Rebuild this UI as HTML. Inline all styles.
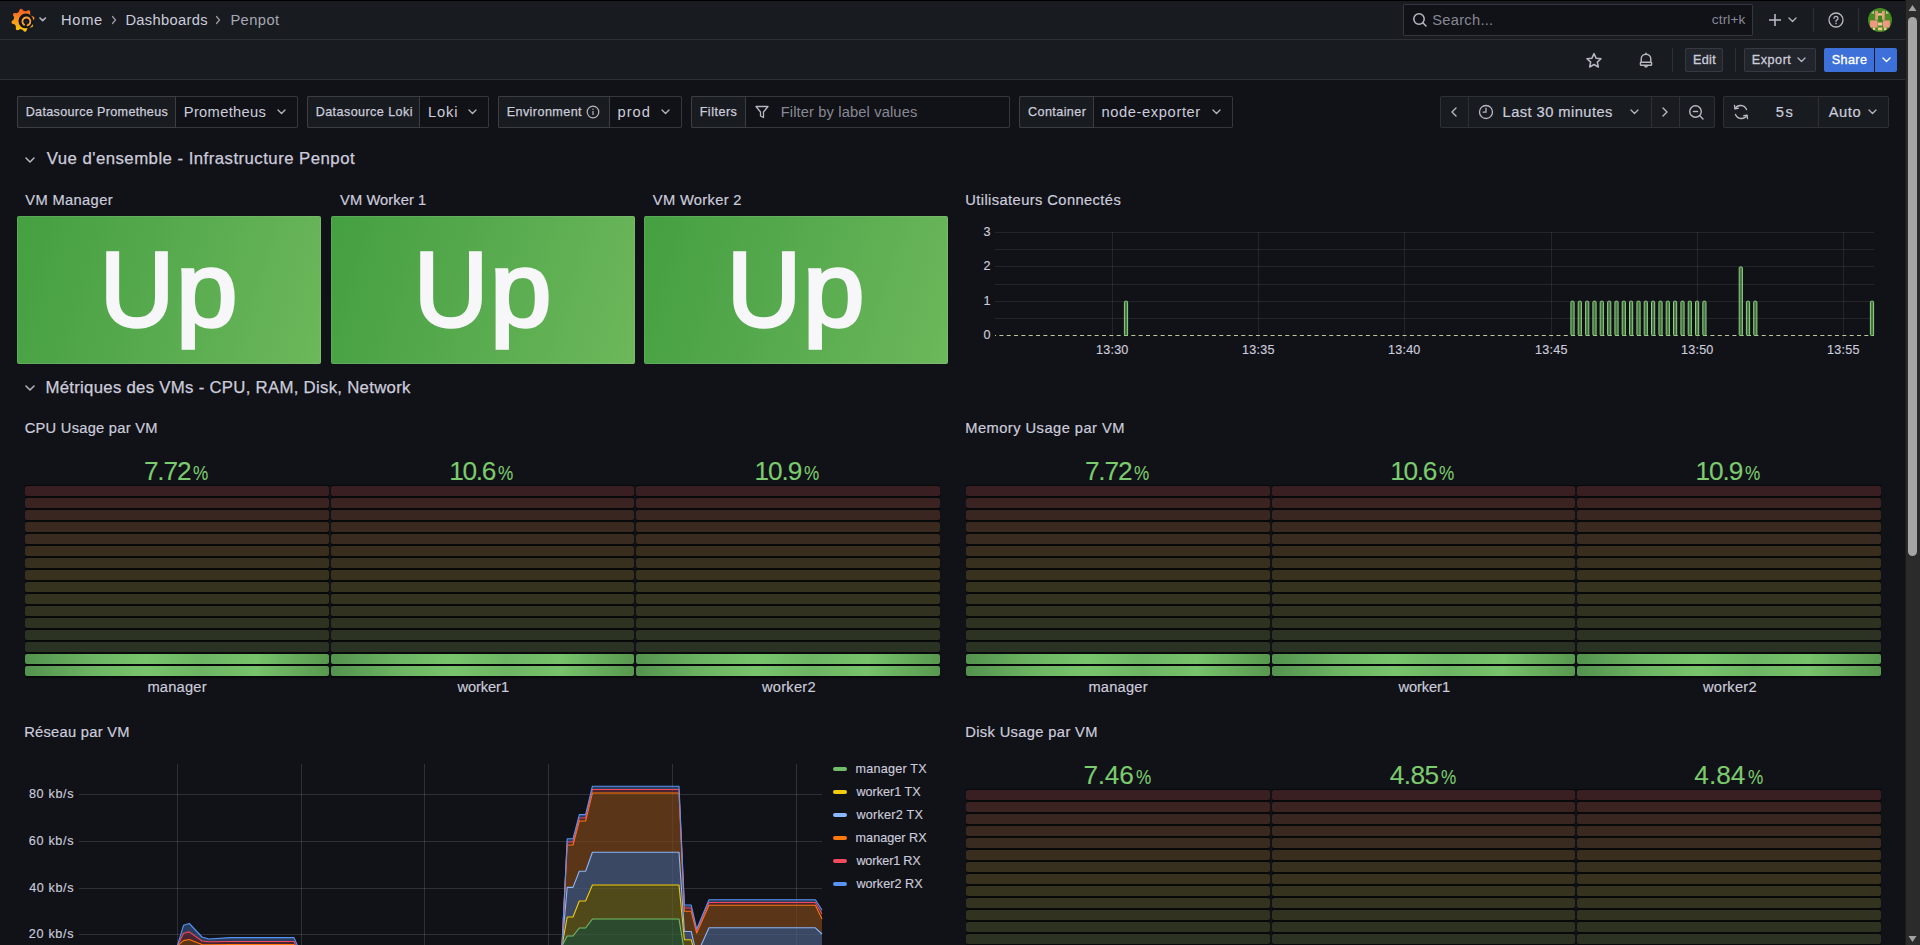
<!DOCTYPE html>
<html><head><meta charset="utf-8"><style>
html,body{margin:0;padding:0;width:1920px;height:945px;overflow:hidden;background:#111217;font-family:"Liberation Sans",sans-serif;}
.t{position:absolute;white-space:pre;line-height:1;}
.r{position:absolute;box-sizing:border-box;}
</style></head><body>
<div class="r" style="left:0px;top:0px;width:1905px;height:40px;background:#181b1f;border-bottom:1px solid rgba(204,204,220,0.12)"></div>
<div class="r" style="left:0px;top:0px;width:1905px;height:1px;background:#000"></div>
<div class="r" style="left:0px;top:40px;width:1905px;height:40px;background:#181b1f;border-bottom:1px solid rgba(204,204,220,0.12)"></div>
<svg class="r" style="left:11px;top:7.5px;" width="24" height="25" viewBox="0 0 24 25"><defs><linearGradient id="lg" x1="0" y1="0" x2="0" y2="1">
<stop offset="0" stop-color="#f05a28"/><stop offset="0.5" stop-color="#f7941e"/><stop offset="1" stop-color="#fbca0a"/></linearGradient></defs>
<polygon fill="url(#lg)" points="22.16,12.20 21.69,12.58 21.27,12.93 21.24,13.29 21.19,13.65 21.12,14.01 21.04,14.37 20.95,14.72 20.90,15.09 21.17,15.58 21.46,16.12 21.72,16.68 21.91,17.25 21.98,17.79 21.92,18.28 21.73,18.70 21.39,19.03 20.94,19.25 20.40,19.37 19.80,19.41 19.18,19.38 18.58,19.32 18.04,19.27 17.76,19.50 17.47,19.72 17.17,19.93 16.86,20.13 16.54,20.31 16.25,20.53 16.09,21.08 15.92,21.66 15.71,22.24 15.44,22.77 15.10,23.21 14.72,23.52 14.28,23.67 13.82,23.67 13.34,23.51 12.87,23.21 12.42,22.81 12.00,22.36 11.62,21.89 11.27,21.47 10.91,21.44 10.55,21.39 10.19,21.32 9.83,21.24 9.48,21.15 9.11,21.10 8.62,21.37 8.08,21.66 7.52,21.92 6.95,22.11 6.41,22.18 5.92,22.12 5.50,21.93 5.17,21.59 4.95,21.14 4.83,20.60 4.79,20.00 4.82,19.38 4.88,18.78 4.93,18.24 4.70,17.96 4.48,17.67 4.27,17.37 4.07,17.06 3.89,16.74 3.67,16.45 3.12,16.29 2.54,16.12 1.96,15.91 1.43,15.64 0.99,15.30 0.68,14.92 0.53,14.48 0.53,14.02 0.69,13.54 0.99,13.07 1.39,12.62 1.84,12.20 2.31,11.82 2.73,11.47 2.76,11.11 2.81,10.75 2.88,10.39 2.96,10.03 3.05,9.68 3.10,9.31 2.83,8.82 2.54,8.28 2.28,7.72 2.09,7.15 2.02,6.61 2.08,6.12 2.27,5.70 2.61,5.37 3.06,5.15 3.60,5.03 4.20,4.99 4.82,5.02 5.42,5.08 5.96,5.13 6.24,4.90 6.53,4.68 6.83,4.47 7.14,4.27 7.46,4.09 7.75,3.87 7.91,3.32 8.08,2.74 8.29,2.16 8.56,1.63 8.90,1.19 9.28,0.88 9.72,0.73 10.18,0.73 10.66,0.89 11.13,1.19 11.58,1.59 12.00,2.04 12.38,2.51 12.73,2.93 13.09,2.96 13.45,3.01 13.81,3.08 14.17,3.16 14.52,3.25 14.89,3.30 15.38,3.03 15.92,2.74 16.48,2.48 17.05,2.29 17.59,2.22 18.08,2.28 18.50,2.47 18.83,2.81 19.05,3.26 19.17,3.80 19.21,4.40 19.18,5.02 19.12,5.62 19.07,6.16 19.30,6.44 19.52,6.73 19.73,7.03 19.93,7.34 20.11,7.66 20.33,7.95 20.88,8.11 21.46,8.28 22.04,8.49 22.57,8.76 23.01,9.10 23.32,9.48 23.47,9.92 23.47,10.38 23.31,10.86 23.01,11.33 22.61,11.78"/>
<circle cx="14.9" cy="12.9" r="7.4" fill="#121316"/>
<path d="M13.11 16.78 A4.0 4.0 0 1 1 16.44 17.36" fill="none" stroke="#f7a040" stroke-width="1.9" stroke-linecap="round"/>
<circle cx="15.5" cy="13.8" r="1.9" fill="#1c1d20"/></svg>
<svg class="r" style="left:37.5px;top:16.45px;" width="9.4" height="6.7" viewBox="0 0 9.4 6.7"><polyline points="2,2 4.7,4.7 7.4,2" fill="none" stroke="#b0b0bc" stroke-width="1.7" stroke-linecap="round" stroke-linejoin="round"/></svg>
<div class="t" style="left:61.09px;top:13.16px;font-size:14.7px;color:#ccccdc;letter-spacing:0.675px;">Home</div>
<svg class="r" style="left:110px;top:15px;" width="8" height="10" viewBox="0 0 8 10"><polyline points="2.5,1.5 5.5,5 2.5,8.5" fill="none" stroke="#9d9da8" stroke-width="1.2" stroke-linecap="round" stroke-linejoin="round"/></svg>
<div class="t" style="left:125.39px;top:13.16px;font-size:14.7px;color:#ccccdc;letter-spacing:0.340px;">Dashboards</div>
<svg class="r" style="left:214px;top:15px;" width="8" height="10" viewBox="0 0 8 10"><polyline points="2.5,1.5 5.5,5 2.5,8.5" fill="none" stroke="#9d9da8" stroke-width="1.2" stroke-linecap="round" stroke-linejoin="round"/></svg>
<div class="t" style="left:230.39px;top:13.16px;font-size:14.7px;color:#a8a8b4;letter-spacing:0.445px;">Penpot</div>
<div class="r" style="left:1403px;top:4px;width:350px;height:32px;background:#111217;border:1px solid rgba(204,204,220,0.20);border-radius:2px"></div>
<svg class="r" style="left:1411.5px;top:12.3px;" width="16" height="16" viewBox="0 0 16 16"><circle cx="7" cy="7" r="5.2" fill="none" stroke="#b8b8c4" stroke-width="1.5"/><line x1="10.8" y1="10.8" x2="14" y2="14" stroke="#b8b8c4" stroke-width="1.5" stroke-linecap="round"/></svg>
<div class="t" style="left:1432.24px;top:13.16px;font-size:14.7px;color:rgba(204,204,220,0.65);letter-spacing:0.268px;">Search...</div>
<div class="t" style="left:1711.82px;top:12.65px;font-size:13.65px;color:rgba(204,204,220,0.65);letter-spacing:0.116px;">ctrl+k</div>
<svg class="r" style="left:1768px;top:13px;" width="14" height="14" viewBox="0 0 14 14"><line x1="7" y1="1" x2="7" y2="13" stroke="#b8b8c4" stroke-width="1.6"/><line x1="1" y1="7" x2="13" y2="7" stroke="#b8b8c4" stroke-width="1.6"/></svg>
<svg class="r" style="left:1786.5px;top:16.25px;" width="11" height="7.5" viewBox="0 0 11 7.5"><polyline points="2,2 5.5,5.5 9,2" fill="none" stroke="#b8b8c4" stroke-width="1.3" stroke-linecap="round" stroke-linejoin="round"/></svg>
<div class="r" style="left:1813px;top:8px;width:1px;height:24px;background:rgba(204,204,220,0.12)"></div>
<svg class="r" style="left:1828px;top:12px;" width="16" height="16" viewBox="0 0 16 16"><circle cx="8" cy="8" r="7" fill="none" stroke="#b8b8c4" stroke-width="1.3"/><path d="M6 6.3 A2 2 0 1 1 8.6 8.2 Q8 8.5 8 9.6" fill="none" stroke="#b8b8c4" stroke-width="1.3" stroke-linecap="round"/><circle cx="8" cy="11.6" r="0.8" fill="#b8b8c4"/></svg>
<div class="r" style="left:1858px;top:8px;width:1px;height:24px;background:rgba(204,204,220,0.12)"></div>
<svg class="r" style="left:1868px;top:7.6px;" width="24" height="24" viewBox="0 0 24 24"><clipPath id="av"><circle cx="12" cy="12" r="12"/></clipPath><g clip-path="url(#av)">
<rect width="24" height="24" fill="#4a8a22"/>
<rect x="7.2" y="2.9" width="2.7" height="8.9" fill="#ee9a80"/><rect x="14" y="2.9" width="2.7" height="8.9" fill="#ee9a80"/>
<rect x="9.9" y="5.3" width="4.1" height="2.4" fill="#e8c890"/>
<rect x="11" y="7.7" width="2.8" height="6" fill="#2f8a1c"/>
<rect x="2.1" y="12.4" width="7.5" height="7.1" fill="#ee9a80"/><rect x="15" y="12.4" width="6.8" height="7.1" fill="#ee9a80"/>
<rect x="9.9" y="14.5" width="4.4" height="3" fill="#f0c896"/><rect x="9.9" y="19.5" width="4.4" height="2.8" fill="#f0c896"/>
<rect x="4.8" y="19.5" width="2.4" height="2.5" fill="#f0d090"/><rect x="16" y="19.5" width="2.4" height="2.5" fill="#f0d090"/>
<polygon points="3,5 6,3 6,6" fill="#a8d890"/><polygon points="21,5 18,3 18,6" fill="#a8d890"/></g></svg>
<svg class="r" style="left:1586px;top:52px;" width="16" height="16" viewBox="0 0 16 16"><polygon points="8.00,1.60 10.06,6.17 15.04,6.71 11.33,10.08 12.35,14.99 8.00,12.50 3.65,14.99 4.67,10.08 0.96,6.71 5.94,6.17" fill="none" stroke="#b8b8c4" stroke-width="1.5" stroke-linejoin="round"/></svg>
<svg class="r" style="left:1638px;top:52px;" width="16" height="16" viewBox="0 0 16 16"><path d="M3.2 10.2 L3.2 7 A4.8 4.8 0 0 1 12.8 7 L12.8 10.2" fill="none" stroke="#b8b8c4" stroke-width="1.4"/><rect x="2.4" y="10.2" width="11.2" height="3" rx="0.8" fill="none" stroke="#b8b8c4" stroke-width="1.4"/><path d="M6.6 13.6 A1.4 1.4 0 0 0 9.4 13.6" fill="none" stroke="#b8b8c4" stroke-width="1.4"/><line x1="8" y1="1.2" x2="8" y2="2.4" stroke="#b8b8c4" stroke-width="1.4" stroke-linecap="round"/></svg>
<div class="r" style="left:1672px;top:48px;width:1px;height:24px;background:rgba(204,204,220,0.12)"></div>
<div class="r" style="left:1685px;top:48px;width:38px;height:24px;background:#22252b;border:1px solid rgba(204,204,220,0.12);border-radius:2px"></div>
<div class="t" style="left:1692.96px;top:53.93px;font-size:12.6px;color:#ccccdc;letter-spacing:0.343px;-webkit-text-stroke:0.3px #ccccdc;">Edit</div>
<div class="r" style="left:1735px;top:48px;width:1px;height:24px;background:rgba(204,204,220,0.12)"></div>
<div class="r" style="left:1744px;top:48px;width:72px;height:24px;background:#22252b;border:1px solid rgba(204,204,220,0.12);border-radius:2px"></div>
<div class="t" style="left:1751.76px;top:53.93px;font-size:12.6px;color:#ccccdc;letter-spacing:0.544px;-webkit-text-stroke:0.3px #ccccdc;">Export</div>
<svg class="r" style="left:1795.5px;top:56.25px;" width="11" height="7.5" viewBox="0 0 11 7.5"><polyline points="2,2 5.5,5.5 9,2" fill="none" stroke="#b8b8c4" stroke-width="1.3" stroke-linecap="round" stroke-linejoin="round"/></svg>
<div class="r" style="left:1824px;top:48px;width:50px;height:24px;background:#3d71d9;border-radius:2px 0 0 2px"></div>
<div class="r" style="left:1875px;top:48px;width:22px;height:24px;background:#3d71d9;border-radius:0 2px 2px 0"></div>
<div class="t" style="left:1831.83px;top:53.93px;font-size:12.6px;color:#ffffff;letter-spacing:0.373px;-webkit-text-stroke:0.35px #ffffff;">Share</div>
<svg class="r" style="left:1880.5px;top:56.25px;" width="11" height="7.5" viewBox="0 0 11 7.5"><polyline points="2,2 5.5,5.5 9,2" fill="none" stroke="#ffffff" stroke-width="1.4" stroke-linecap="round" stroke-linejoin="round"/></svg>
<div class="r" style="left:17px;top:96px;width:281px;height:32px;background:#111217;border:1px solid rgba(204,204,220,0.20);border-radius:2px"></div>
<div class="r" style="left:17px;top:96px;width:159px;height:32px;background:#181b1f;border:1px solid rgba(204,204,220,0.20);border-radius:2px 0 0 2px"></div>
<div class="t" style="left:25.66px;top:106.43px;font-size:12.6px;color:#ccccdc;letter-spacing:0.316px;-webkit-text-stroke:0.25px #ccccdc;">Datasource Prometheus</div>
<div class="t" style="left:183.79px;top:105.16px;font-size:14.7px;color:#ccccdc;letter-spacing:0.318px;">Prometheus</div>
<svg class="r" style="left:275.5px;top:108.25px;" width="11" height="7.5" viewBox="0 0 11 7.5"><polyline points="2,2 5.5,5.5 9,2" fill="none" stroke="#b8b8c4" stroke-width="1.3" stroke-linecap="round" stroke-linejoin="round"/></svg>
<div class="r" style="left:307px;top:96px;width:182px;height:32px;background:#111217;border:1px solid rgba(204,204,220,0.20);border-radius:2px"></div>
<div class="r" style="left:307px;top:96px;width:113px;height:32px;background:#181b1f;border:1px solid rgba(204,204,220,0.20);border-radius:2px 0 0 2px"></div>
<div class="t" style="left:315.66px;top:106.43px;font-size:12.6px;color:#ccccdc;letter-spacing:0.416px;-webkit-text-stroke:0.25px #ccccdc;">Datasource Loki</div>
<div class="t" style="left:427.89px;top:105.16px;font-size:14.7px;color:#ccccdc;letter-spacing:0.910px;">Loki</div>
<svg class="r" style="left:466.5px;top:108.25px;" width="11" height="7.5" viewBox="0 0 11 7.5"><polyline points="2,2 5.5,5.5 9,2" fill="none" stroke="#b8b8c4" stroke-width="1.3" stroke-linecap="round" stroke-linejoin="round"/></svg>
<div class="r" style="left:498px;top:96px;width:184px;height:32px;background:#111217;border:1px solid rgba(204,204,220,0.20);border-radius:2px"></div>
<div class="r" style="left:498px;top:96px;width:112px;height:32px;background:#181b1f;border:1px solid rgba(204,204,220,0.20);border-radius:2px 0 0 2px"></div>
<div class="t" style="left:506.66px;top:106.43px;font-size:12.6px;color:#ccccdc;letter-spacing:0.422px;-webkit-text-stroke:0.25px #ccccdc;">Environment</div>
<div class="t" style="left:617.44px;top:105.16px;font-size:14.7px;color:#ccccdc;letter-spacing:1.058px;">prod</div>
<svg class="r" style="left:659.5px;top:108.25px;" width="11" height="7.5" viewBox="0 0 11 7.5"><polyline points="2,2 5.5,5.5 9,2" fill="none" stroke="#b8b8c4" stroke-width="1.3" stroke-linecap="round" stroke-linejoin="round"/></svg>
<svg class="r" style="left:586px;top:105px;" width="14" height="14" viewBox="0 0 14 14"><circle cx="7" cy="7" r="5.8" fill="none" stroke="#b8b8c4" stroke-width="1.2"/><line x1="7" y1="6" x2="7" y2="10" stroke="#b8b8c4" stroke-width="1.2"/><circle cx="7" cy="4.2" r="0.7" fill="#b8b8c4"/></svg>
<div class="r" style="left:691px;top:96px;width:319px;height:32px;background:#111217;border:1px solid rgba(204,204,220,0.20);border-radius:2px"></div>
<div class="r" style="left:691px;top:96px;width:55px;height:32px;background:#181b1f;border:1px solid rgba(204,204,220,0.20);border-radius:2px 0 0 2px"></div>
<div class="t" style="left:699.66px;top:106.43px;font-size:12.6px;color:#ccccdc;letter-spacing:0.496px;-webkit-text-stroke:0.25px #ccccdc;">Filters</div>
<svg class="r" style="left:754px;top:104px;" width="16" height="16" viewBox="0 0 16 16"><path d="M2 2.5 L14 2.5 L9.5 8 L9.5 13.5 L6.5 12 L6.5 8 Z" fill="none" stroke="#b8b8c4" stroke-width="1.3" stroke-linejoin="round"/></svg>
<div class="t" style="left:780.69px;top:105.16px;font-size:14.7px;color:rgba(204,204,220,0.65);letter-spacing:0.130px;">Filter by label values</div>
<div class="r" style="left:1019px;top:96px;width:214px;height:32px;background:#111217;border:1px solid rgba(204,204,220,0.20);border-radius:2px"></div>
<div class="r" style="left:1019px;top:96px;width:75px;height:32px;background:#181b1f;border:1px solid rgba(204,204,220,0.20);border-radius:2px 0 0 2px"></div>
<div class="t" style="left:1028.07px;top:106.43px;font-size:12.6px;color:#ccccdc;letter-spacing:0.400px;-webkit-text-stroke:0.25px #ccccdc;">Container</div>
<div class="t" style="left:1101.44px;top:105.16px;font-size:14.7px;color:#ccccdc;letter-spacing:0.614px;">node-exporter</div>
<svg class="r" style="left:1210.5px;top:108.25px;" width="11" height="7.5" viewBox="0 0 11 7.5"><polyline points="2,2 5.5,5.5 9,2" fill="none" stroke="#b8b8c4" stroke-width="1.3" stroke-linecap="round" stroke-linejoin="round"/></svg>
<div class="r" style="left:1440px;top:96px;width:275px;height:32px;background:#181b1f;border:1px solid rgba(204,204,220,0.12);border-radius:2px"></div>
<div class="r" style="left:1468px;top:97px;width:1px;height:30px;background:rgba(204,204,220,0.12)"></div>
<div class="r" style="left:1651px;top:97px;width:1px;height:30px;background:rgba(204,204,220,0.12)"></div>
<div class="r" style="left:1679px;top:97px;width:1px;height:30px;background:rgba(204,204,220,0.12)"></div>
<svg class="r" style="left:1450px;top:106px;" width="8" height="12" viewBox="0 0 8 12"><polyline points="6,2 2,6 6,10" fill="none" stroke="#b8b8c4" stroke-width="1.4" stroke-linecap="round" stroke-linejoin="round"/></svg>
<svg class="r" style="left:1478px;top:104px;" width="16" height="16" viewBox="0 0 16 16"><circle cx="8" cy="8" r="6.5" fill="none" stroke="#b8b8c4" stroke-width="1.3"/><polyline points="8,4.2 8,8.2 5.2,8.2" fill="none" stroke="#b8b8c4" stroke-width="1.3" stroke-linecap="round"/></svg>
<div class="t" style="left:1502.59px;top:105.16px;font-size:14.7px;color:#ccccdc;letter-spacing:0.439px;-webkit-text-stroke:0.2px #ccccdc;">Last 30 minutes</div>
<svg class="r" style="left:1628.5px;top:108.25px;" width="11" height="7.5" viewBox="0 0 11 7.5"><polyline points="2,2 5.5,5.5 9,2" fill="none" stroke="#b8b8c4" stroke-width="1.3" stroke-linecap="round" stroke-linejoin="round"/></svg>
<svg class="r" style="left:1661px;top:106px;" width="8" height="12" viewBox="0 0 8 12"><polyline points="2,2 6,6 2,10" fill="none" stroke="#b8b8c4" stroke-width="1.4" stroke-linecap="round" stroke-linejoin="round"/></svg>
<svg class="r" style="left:1688px;top:104px;" width="17" height="17" viewBox="0 0 17 17"><circle cx="7.5" cy="7.5" r="5.8" fill="none" stroke="#b8b8c4" stroke-width="1.4"/><line x1="11.8" y1="11.8" x2="15" y2="15" stroke="#b8b8c4" stroke-width="1.4" stroke-linecap="round"/><line x1="4.8" y1="7.5" x2="10.2" y2="7.5" stroke="#b8b8c4" stroke-width="1.4"/></svg>
<div class="r" style="left:1723px;top:96px;width:166px;height:32px;background:#181b1f;border:1px solid rgba(204,204,220,0.12);border-radius:2px"></div>
<div class="r" style="left:1818px;top:97px;width:1px;height:30px;background:rgba(204,204,220,0.12)"></div>
<svg class="r" style="left:1732px;top:103px;" width="18" height="18" viewBox="0 0 18 18"><path d="M14.5 6.5 A6.5 6.5 0 0 0 3 5.5" fill="none" stroke="#b8b8c4" stroke-width="1.4" stroke-linecap="round"/><polyline points="2.5,2.5 3,5.8 6.2,5.3" fill="none" stroke="#b8b8c4" stroke-width="1.4" stroke-linecap="round" stroke-linejoin="round"/><path d="M3.5 11.5 A6.5 6.5 0 0 0 15 12.5" fill="none" stroke="#b8b8c4" stroke-width="1.4" stroke-linecap="round"/><polyline points="15.5,15.5 15,12.2 11.8,12.7" fill="none" stroke="#b8b8c4" stroke-width="1.4" stroke-linecap="round" stroke-linejoin="round"/></svg>
<div class="t" style="left:1775.81px;top:105.16px;font-size:14.7px;color:#ccccdc;letter-spacing:1.494px;-webkit-text-stroke:0.2px #ccccdc;">5s</div>
<div class="t" style="left:1828.66px;top:105.16px;font-size:14.7px;color:#ccccdc;letter-spacing:0.572px;-webkit-text-stroke:0.2px #ccccdc;">Auto</div>
<svg class="r" style="left:1866.5px;top:108.25px;" width="11" height="7.5" viewBox="0 0 11 7.5"><polyline points="2,2 5.5,5.5 9,2" fill="none" stroke="#b8b8c4" stroke-width="1.3" stroke-linecap="round" stroke-linejoin="round"/></svg>
<svg class="r" style="left:24.0px;top:156.0px;" width="12" height="8.0" viewBox="0 0 12 8.0"><polyline points="2,2 6.0,6.0 10,2" fill="none" stroke="#b8b8c4" stroke-width="1.5" stroke-linecap="round" stroke-linejoin="round"/></svg>
<div class="t" style="left:46.72px;top:151.08px;font-size:16.8px;color:#ccccdc;letter-spacing:0.461px;-webkit-text-stroke:0.25px #ccccdc;">Vue d'ensemble - Infrastructure Penpot</div>
<div class="t" style="left:25.33px;top:192.86px;font-size:14.7px;color:#ccccdc;letter-spacing:0.348px;-webkit-text-stroke:0.2px #ccccdc;">VM Manager</div>
<div class="r" style="left:17px;top:216px;width:304px;height:148px;background:linear-gradient(108deg,#44a040 0%,#54a84c 40%,#6cb85b 100%);border-radius:2px;box-shadow:inset 0 0 0 1px rgba(204,204,220,0.16)"></div>
<div class="t" style="left:100.00px;top:235.87px;font-size:106px;color:#f7f7f9;-webkit-text-stroke:3.4px #f7f7f9;transform:scaleX(0.9677);transform-origin:0 0">U</div>
<div class="t" style="left:176.49px;top:235.87px;font-size:106px;color:#f7f7f9;-webkit-text-stroke:3.4px #f7f7f9;transform:scaleX(1.0431);transform-origin:0 0">p</div>
<div class="t" style="left:340.08px;top:192.86px;font-size:14.7px;color:#ccccdc;letter-spacing:0.079px;-webkit-text-stroke:0.2px #ccccdc;">VM Worker 1</div>
<div class="r" style="left:331px;top:216px;width:304px;height:148px;background:linear-gradient(108deg,#44a040 0%,#54a84c 40%,#6cb85b 100%);border-radius:2px;box-shadow:inset 0 0 0 1px rgba(204,204,220,0.16)"></div>
<div class="t" style="left:414.00px;top:235.87px;font-size:106px;color:#f7f7f9;-webkit-text-stroke:3.4px #f7f7f9;transform:scaleX(0.9677);transform-origin:0 0">U</div>
<div class="t" style="left:490.49px;top:235.87px;font-size:106px;color:#f7f7f9;-webkit-text-stroke:3.4px #f7f7f9;transform:scaleX(1.0431);transform-origin:0 0">p</div>
<div class="t" style="left:652.83px;top:192.86px;font-size:14.7px;color:#ccccdc;letter-spacing:0.329px;-webkit-text-stroke:0.2px #ccccdc;">VM Worker 2</div>
<div class="r" style="left:644px;top:216px;width:304px;height:148px;background:linear-gradient(108deg,#44a040 0%,#54a84c 40%,#6cb85b 100%);border-radius:2px;box-shadow:inset 0 0 0 1px rgba(204,204,220,0.16)"></div>
<div class="t" style="left:727.00px;top:235.87px;font-size:106px;color:#f7f7f9;-webkit-text-stroke:3.4px #f7f7f9;transform:scaleX(0.9677);transform-origin:0 0">U</div>
<div class="t" style="left:803.49px;top:235.87px;font-size:106px;color:#f7f7f9;-webkit-text-stroke:3.4px #f7f7f9;transform:scaleX(1.0431);transform-origin:0 0">p</div>
<div class="t" style="left:965.26px;top:192.86px;font-size:14.7px;color:#ccccdc;letter-spacing:0.409px;-webkit-text-stroke:0.2px #ccccdc;">Utilisateurs Connectés</div>
<svg class="r" style="left:0px;top:0px;pointer-events:none" width="1905" height="945" viewBox="0 0 1905 945"><line x1="995" y1="232.5" x2="1874" y2="232.5" stroke="rgba(204,204,220,0.10)" stroke-width="1"/><line x1="995" y1="249.5" x2="1874" y2="249.5" stroke="rgba(204,204,220,0.10)" stroke-width="1"/><line x1="995" y1="266.5" x2="1874" y2="266.5" stroke="rgba(204,204,220,0.10)" stroke-width="1"/><line x1="995" y1="284.5" x2="1874" y2="284.5" stroke="rgba(204,204,220,0.10)" stroke-width="1"/><line x1="995" y1="301.5" x2="1874" y2="301.5" stroke="rgba(204,204,220,0.10)" stroke-width="1"/><line x1="995" y1="318.5" x2="1874" y2="318.5" stroke="rgba(204,204,220,0.10)" stroke-width="1"/><line x1="1112.5" y1="232" x2="1112.5" y2="341" stroke="rgba(204,204,220,0.10)" stroke-width="1"/><line x1="1258.5" y1="232" x2="1258.5" y2="341" stroke="rgba(204,204,220,0.10)" stroke-width="1"/><line x1="1404.5" y1="232" x2="1404.5" y2="341" stroke="rgba(204,204,220,0.10)" stroke-width="1"/><line x1="1551.5" y1="232" x2="1551.5" y2="341" stroke="rgba(204,204,220,0.10)" stroke-width="1"/><line x1="1697.5" y1="232" x2="1697.5" y2="341" stroke="rgba(204,204,220,0.10)" stroke-width="1"/><line x1="1843.5" y1="232" x2="1843.5" y2="341" stroke="rgba(204,204,220,0.10)" stroke-width="1"/><line x1="995" y1="335.5" x2="1874" y2="335.5" stroke="#b9c79c" stroke-width="1.2" stroke-dasharray="4 3.33" stroke-dashoffset="2.94"/><rect x="1124.4" y="301.2" width="3.2" height="34.3" rx="1" fill="rgba(115,191,105,0.55)" stroke="#8fd27f" stroke-width="1"/><rect x="1570.9" y="301.2" width="3.2" height="34.3" rx="1" fill="rgba(115,191,105,0.55)" stroke="#8fd27f" stroke-width="1"/><rect x="1578.2" y="301.2" width="3.2" height="34.3" rx="1" fill="rgba(115,191,105,0.55)" stroke="#8fd27f" stroke-width="1"/><rect x="1585.6" y="301.2" width="3.2" height="34.3" rx="1" fill="rgba(115,191,105,0.55)" stroke="#8fd27f" stroke-width="1"/><rect x="1592.9" y="301.2" width="3.2" height="34.3" rx="1" fill="rgba(115,191,105,0.55)" stroke="#8fd27f" stroke-width="1"/><rect x="1600.2" y="301.2" width="3.2" height="34.3" rx="1" fill="rgba(115,191,105,0.55)" stroke="#8fd27f" stroke-width="1"/><rect x="1607.6" y="301.2" width="3.2" height="34.3" rx="1" fill="rgba(115,191,105,0.55)" stroke="#8fd27f" stroke-width="1"/><rect x="1614.9" y="301.2" width="3.2" height="34.3" rx="1" fill="rgba(115,191,105,0.55)" stroke="#8fd27f" stroke-width="1"/><rect x="1622.2" y="301.2" width="3.2" height="34.3" rx="1" fill="rgba(115,191,105,0.55)" stroke="#8fd27f" stroke-width="1"/><rect x="1629.5" y="301.2" width="3.2" height="34.3" rx="1" fill="rgba(115,191,105,0.55)" stroke="#8fd27f" stroke-width="1"/><rect x="1636.9" y="301.2" width="3.2" height="34.3" rx="1" fill="rgba(115,191,105,0.55)" stroke="#8fd27f" stroke-width="1"/><rect x="1644.2" y="301.2" width="3.2" height="34.3" rx="1" fill="rgba(115,191,105,0.55)" stroke="#8fd27f" stroke-width="1"/><rect x="1651.5" y="301.2" width="3.2" height="34.3" rx="1" fill="rgba(115,191,105,0.55)" stroke="#8fd27f" stroke-width="1"/><rect x="1658.9" y="301.2" width="3.2" height="34.3" rx="1" fill="rgba(115,191,105,0.55)" stroke="#8fd27f" stroke-width="1"/><rect x="1666.2" y="301.2" width="3.2" height="34.3" rx="1" fill="rgba(115,191,105,0.55)" stroke="#8fd27f" stroke-width="1"/><rect x="1673.5" y="301.2" width="3.2" height="34.3" rx="1" fill="rgba(115,191,105,0.55)" stroke="#8fd27f" stroke-width="1"/><rect x="1680.9" y="301.2" width="3.2" height="34.3" rx="1" fill="rgba(115,191,105,0.55)" stroke="#8fd27f" stroke-width="1"/><rect x="1688.2" y="301.2" width="3.2" height="34.3" rx="1" fill="rgba(115,191,105,0.55)" stroke="#8fd27f" stroke-width="1"/><rect x="1695.5" y="301.2" width="3.2" height="34.3" rx="1" fill="rgba(115,191,105,0.55)" stroke="#8fd27f" stroke-width="1"/><rect x="1702.8" y="301.2" width="3.2" height="34.3" rx="1" fill="rgba(115,191,105,0.55)" stroke="#8fd27f" stroke-width="1"/><rect x="1739.2" y="266.9" width="3.2" height="68.6" rx="1" fill="rgba(115,191,105,0.55)" stroke="#8fd27f" stroke-width="1"/><rect x="1746.4" y="301.2" width="3.2" height="34.3" rx="1" fill="rgba(115,191,105,0.55)" stroke="#8fd27f" stroke-width="1"/><rect x="1753.7" y="301.2" width="3.2" height="34.3" rx="1" fill="rgba(115,191,105,0.55)" stroke="#8fd27f" stroke-width="1"/><rect x="1870.4" y="301.2" width="3.2" height="34.3" rx="1" fill="rgba(115,191,105,0.55)" stroke="#8fd27f" stroke-width="1"/></svg>
<div class="t" style="left:983.44px;top:226.23px;font-size:12.6px;color:#ccccdc;-webkit-text-stroke:0.15px #ccccdc;">3</div>
<div class="t" style="left:983.51px;top:260.23px;font-size:12.6px;color:#ccccdc;-webkit-text-stroke:0.15px #ccccdc;">2</div>
<div class="t" style="left:983.51px;top:294.73px;font-size:12.6px;color:#ccccdc;-webkit-text-stroke:0.15px #ccccdc;">1</div>
<div class="t" style="left:983.38px;top:329.23px;font-size:12.6px;color:#ccccdc;-webkit-text-stroke:0.15px #ccccdc;">0</div>
<div class="t" style="left:1095.96px;top:343.93px;font-size:12.6px;color:#ccccdc;letter-spacing:0.222px;-webkit-text-stroke:0.15px #ccccdc;">13:30</div>
<div class="t" style="left:1241.96px;top:343.93px;font-size:12.6px;color:#ccccdc;letter-spacing:0.229px;-webkit-text-stroke:0.15px #ccccdc;">13:35</div>
<div class="t" style="left:1387.96px;top:343.93px;font-size:12.6px;color:#ccccdc;letter-spacing:0.222px;-webkit-text-stroke:0.15px #ccccdc;">13:40</div>
<div class="t" style="left:1534.96px;top:343.93px;font-size:12.6px;color:#ccccdc;letter-spacing:0.229px;-webkit-text-stroke:0.15px #ccccdc;">13:45</div>
<div class="t" style="left:1680.96px;top:343.93px;font-size:12.6px;color:#ccccdc;letter-spacing:0.222px;-webkit-text-stroke:0.15px #ccccdc;">13:50</div>
<div class="t" style="left:1826.96px;top:343.93px;font-size:12.6px;color:#ccccdc;letter-spacing:0.229px;-webkit-text-stroke:0.15px #ccccdc;">13:55</div>
<svg class="r" style="left:24.0px;top:384.0px;" width="12" height="8.0" viewBox="0 0 12 8.0"><polyline points="2,2 6.0,6.0 10,2" fill="none" stroke="#b8b8c4" stroke-width="1.5" stroke-linecap="round" stroke-linejoin="round"/></svg>
<div class="t" style="left:45.41px;top:380.08px;font-size:16.8px;color:#ccccdc;letter-spacing:0.276px;-webkit-text-stroke:0.25px #ccccdc;">Métriques des VMs - CPU, RAM, Disk, Network</div>
<div class="t" style="left:24.66px;top:420.66px;font-size:14.7px;color:#ccccdc;letter-spacing:0.256px;-webkit-text-stroke:0.2px #ccccdc;">CPU Usage par VM</div>
<div class="t" style="left:143.94px;top:458.38px;font-size:26.25px;color:#7ccb6f;letter-spacing:-1.166px;-webkit-text-stroke:0.1px #7ccb6f;">7.72</div>
<div class="t" style="left:193.15px;top:464.01px;font-size:19.95px;color:#7ccb6f;-webkit-text-stroke:0.1px #7ccb6f;transform:scaleX(0.86);transform-origin:0 0">%</div>
<div class="r" style="left:25px;top:485px;width:304px;height:193px;background:#08090b"></div>
<div class="r" style="left:25px;top:486px;width:304px;height:10px;background:#3a1f22;border-radius:2px"></div>
<div class="r" style="left:25px;top:498px;width:304px;height:10px;background:#3a2321;border-radius:2px"></div>
<div class="r" style="left:25px;top:510px;width:304px;height:10px;background:#3a2620;border-radius:2px"></div>
<div class="r" style="left:25px;top:522px;width:304px;height:10px;background:#3a291f;border-radius:2px"></div>
<div class="r" style="left:25px;top:534px;width:304px;height:10px;background:#392b1f;border-radius:2px"></div>
<div class="r" style="left:25px;top:546px;width:304px;height:10px;background:#392e1e;border-radius:2px"></div>
<div class="r" style="left:25px;top:558px;width:304px;height:10px;background:#38301e;border-radius:2px"></div>
<div class="r" style="left:25px;top:570px;width:304px;height:10px;background:#37311e;border-radius:2px"></div>
<div class="r" style="left:25px;top:582px;width:304px;height:10px;background:#35321e;border-radius:2px"></div>
<div class="r" style="left:25px;top:594px;width:304px;height:10px;background:#33331f;border-radius:2px"></div>
<div class="r" style="left:25px;top:606px;width:304px;height:10px;background:#313320;border-radius:2px"></div>
<div class="r" style="left:25px;top:618px;width:304px;height:10px;background:#2e3321;border-radius:2px"></div>
<div class="r" style="left:25px;top:630px;width:304px;height:10px;background:#2c3322;border-radius:2px"></div>
<div class="r" style="left:25px;top:642px;width:304px;height:10px;background:#293223;border-radius:2px"></div>
<div class="r" style="left:25px;top:654px;width:304px;height:10px;background:linear-gradient(90deg,#53924f,#6cb462 22%,#78c46c 40%,#6db563 58%,#77c26b 76%,#58984f);border-radius:2px"></div>
<div class="r" style="left:25px;top:666px;width:304px;height:10px;background:linear-gradient(90deg,#53924f,#6cb462 22%,#78c46c 40%,#6db563 58%,#77c26b 76%,#58984f);border-radius:2px"></div>
<div class="t" style="left:147.44px;top:679.96px;font-size:14.7px;color:#ccccdc;letter-spacing:0.191px;-webkit-text-stroke:0.15px #ccccdc;">manager</div>
<div class="t" style="left:449.28px;top:458.38px;font-size:26.25px;color:#7ccb6f;letter-spacing:-1.324px;-webkit-text-stroke:0.1px #7ccb6f;">10.6</div>
<div class="t" style="left:498.15px;top:464.01px;font-size:19.95px;color:#7ccb6f;-webkit-text-stroke:0.1px #7ccb6f;transform:scaleX(0.86);transform-origin:0 0">%</div>
<div class="r" style="left:331px;top:485px;width:303px;height:193px;background:#08090b"></div>
<div class="r" style="left:331px;top:486px;width:303px;height:10px;background:#3a1f22;border-radius:2px"></div>
<div class="r" style="left:331px;top:498px;width:303px;height:10px;background:#3a2321;border-radius:2px"></div>
<div class="r" style="left:331px;top:510px;width:303px;height:10px;background:#3a2620;border-radius:2px"></div>
<div class="r" style="left:331px;top:522px;width:303px;height:10px;background:#3a291f;border-radius:2px"></div>
<div class="r" style="left:331px;top:534px;width:303px;height:10px;background:#392b1f;border-radius:2px"></div>
<div class="r" style="left:331px;top:546px;width:303px;height:10px;background:#392e1e;border-radius:2px"></div>
<div class="r" style="left:331px;top:558px;width:303px;height:10px;background:#38301e;border-radius:2px"></div>
<div class="r" style="left:331px;top:570px;width:303px;height:10px;background:#37311e;border-radius:2px"></div>
<div class="r" style="left:331px;top:582px;width:303px;height:10px;background:#35321e;border-radius:2px"></div>
<div class="r" style="left:331px;top:594px;width:303px;height:10px;background:#33331f;border-radius:2px"></div>
<div class="r" style="left:331px;top:606px;width:303px;height:10px;background:#313320;border-radius:2px"></div>
<div class="r" style="left:331px;top:618px;width:303px;height:10px;background:#2e3321;border-radius:2px"></div>
<div class="r" style="left:331px;top:630px;width:303px;height:10px;background:#2c3322;border-radius:2px"></div>
<div class="r" style="left:331px;top:642px;width:303px;height:10px;background:#293223;border-radius:2px"></div>
<div class="r" style="left:331px;top:654px;width:303px;height:10px;background:linear-gradient(90deg,#53924f,#6cb462 22%,#78c46c 40%,#6db563 58%,#77c26b 76%,#58984f);border-radius:2px"></div>
<div class="r" style="left:331px;top:666px;width:303px;height:10px;background:linear-gradient(90deg,#53924f,#6cb462 22%,#78c46c 40%,#6db563 58%,#77c26b 76%,#58984f);border-radius:2px"></div>
<div class="t" style="left:457.44px;top:679.96px;font-size:14.7px;color:#ccccdc;letter-spacing:-0.099px;-webkit-text-stroke:0.15px #ccccdc;">worker1</div>
<div class="t" style="left:754.43px;top:458.38px;font-size:26.25px;color:#7ccb6f;letter-spacing:-1.069px;-webkit-text-stroke:0.1px #7ccb6f;">10.9</div>
<div class="t" style="left:804.00px;top:464.01px;font-size:19.95px;color:#7ccb6f;-webkit-text-stroke:0.1px #7ccb6f;transform:scaleX(0.86);transform-origin:0 0">%</div>
<div class="r" style="left:636px;top:485px;width:304px;height:193px;background:#08090b"></div>
<div class="r" style="left:636px;top:486px;width:304px;height:10px;background:#3a1f22;border-radius:2px"></div>
<div class="r" style="left:636px;top:498px;width:304px;height:10px;background:#3a2321;border-radius:2px"></div>
<div class="r" style="left:636px;top:510px;width:304px;height:10px;background:#3a2620;border-radius:2px"></div>
<div class="r" style="left:636px;top:522px;width:304px;height:10px;background:#3a291f;border-radius:2px"></div>
<div class="r" style="left:636px;top:534px;width:304px;height:10px;background:#392b1f;border-radius:2px"></div>
<div class="r" style="left:636px;top:546px;width:304px;height:10px;background:#392e1e;border-radius:2px"></div>
<div class="r" style="left:636px;top:558px;width:304px;height:10px;background:#38301e;border-radius:2px"></div>
<div class="r" style="left:636px;top:570px;width:304px;height:10px;background:#37311e;border-radius:2px"></div>
<div class="r" style="left:636px;top:582px;width:304px;height:10px;background:#35321e;border-radius:2px"></div>
<div class="r" style="left:636px;top:594px;width:304px;height:10px;background:#33331f;border-radius:2px"></div>
<div class="r" style="left:636px;top:606px;width:304px;height:10px;background:#313320;border-radius:2px"></div>
<div class="r" style="left:636px;top:618px;width:304px;height:10px;background:#2e3321;border-radius:2px"></div>
<div class="r" style="left:636px;top:630px;width:304px;height:10px;background:#2c3322;border-radius:2px"></div>
<div class="r" style="left:636px;top:642px;width:304px;height:10px;background:#293223;border-radius:2px"></div>
<div class="r" style="left:636px;top:654px;width:304px;height:10px;background:linear-gradient(90deg,#53924f,#6cb462 22%,#78c46c 40%,#6db563 58%,#77c26b 76%,#58984f);border-radius:2px"></div>
<div class="r" style="left:636px;top:666px;width:304px;height:10px;background:linear-gradient(90deg,#53924f,#6cb462 22%,#78c46c 40%,#6db563 58%,#77c26b 76%,#58984f);border-radius:2px"></div>
<div class="t" style="left:761.94px;top:679.96px;font-size:14.7px;color:#ccccdc;letter-spacing:0.234px;-webkit-text-stroke:0.15px #ccccdc;">worker2</div>
<div class="t" style="left:965.19px;top:420.66px;font-size:14.7px;color:#ccccdc;letter-spacing:0.460px;-webkit-text-stroke:0.2px #ccccdc;">Memory Usage par VM</div>
<div class="t" style="left:1084.94px;top:458.38px;font-size:26.25px;color:#7ccb6f;letter-spacing:-1.166px;-webkit-text-stroke:0.1px #7ccb6f;">7.72</div>
<div class="t" style="left:1134.15px;top:464.01px;font-size:19.95px;color:#7ccb6f;-webkit-text-stroke:0.1px #7ccb6f;transform:scaleX(0.86);transform-origin:0 0">%</div>
<div class="r" style="left:966px;top:485px;width:304px;height:193px;background:#08090b"></div>
<div class="r" style="left:966px;top:486px;width:304px;height:10px;background:#3a1f22;border-radius:2px"></div>
<div class="r" style="left:966px;top:498px;width:304px;height:10px;background:#3a2321;border-radius:2px"></div>
<div class="r" style="left:966px;top:510px;width:304px;height:10px;background:#3a2620;border-radius:2px"></div>
<div class="r" style="left:966px;top:522px;width:304px;height:10px;background:#3a291f;border-radius:2px"></div>
<div class="r" style="left:966px;top:534px;width:304px;height:10px;background:#392b1f;border-radius:2px"></div>
<div class="r" style="left:966px;top:546px;width:304px;height:10px;background:#392e1e;border-radius:2px"></div>
<div class="r" style="left:966px;top:558px;width:304px;height:10px;background:#38301e;border-radius:2px"></div>
<div class="r" style="left:966px;top:570px;width:304px;height:10px;background:#37311e;border-radius:2px"></div>
<div class="r" style="left:966px;top:582px;width:304px;height:10px;background:#35321e;border-radius:2px"></div>
<div class="r" style="left:966px;top:594px;width:304px;height:10px;background:#33331f;border-radius:2px"></div>
<div class="r" style="left:966px;top:606px;width:304px;height:10px;background:#313320;border-radius:2px"></div>
<div class="r" style="left:966px;top:618px;width:304px;height:10px;background:#2e3321;border-radius:2px"></div>
<div class="r" style="left:966px;top:630px;width:304px;height:10px;background:#2c3322;border-radius:2px"></div>
<div class="r" style="left:966px;top:642px;width:304px;height:10px;background:#293223;border-radius:2px"></div>
<div class="r" style="left:966px;top:654px;width:304px;height:10px;background:linear-gradient(90deg,#53924f,#6cb462 22%,#78c46c 40%,#6db563 58%,#77c26b 76%,#58984f);border-radius:2px"></div>
<div class="r" style="left:966px;top:666px;width:304px;height:10px;background:linear-gradient(90deg,#53924f,#6cb462 22%,#78c46c 40%,#6db563 58%,#77c26b 76%,#58984f);border-radius:2px"></div>
<div class="t" style="left:1088.44px;top:679.96px;font-size:14.7px;color:#ccccdc;letter-spacing:0.191px;-webkit-text-stroke:0.15px #ccccdc;">manager</div>
<div class="t" style="left:1390.28px;top:458.38px;font-size:26.25px;color:#7ccb6f;letter-spacing:-1.324px;-webkit-text-stroke:0.1px #7ccb6f;">10.6</div>
<div class="t" style="left:1439.15px;top:464.01px;font-size:19.95px;color:#7ccb6f;-webkit-text-stroke:0.1px #7ccb6f;transform:scaleX(0.86);transform-origin:0 0">%</div>
<div class="r" style="left:1272px;top:485px;width:303px;height:193px;background:#08090b"></div>
<div class="r" style="left:1272px;top:486px;width:303px;height:10px;background:#3a1f22;border-radius:2px"></div>
<div class="r" style="left:1272px;top:498px;width:303px;height:10px;background:#3a2321;border-radius:2px"></div>
<div class="r" style="left:1272px;top:510px;width:303px;height:10px;background:#3a2620;border-radius:2px"></div>
<div class="r" style="left:1272px;top:522px;width:303px;height:10px;background:#3a291f;border-radius:2px"></div>
<div class="r" style="left:1272px;top:534px;width:303px;height:10px;background:#392b1f;border-radius:2px"></div>
<div class="r" style="left:1272px;top:546px;width:303px;height:10px;background:#392e1e;border-radius:2px"></div>
<div class="r" style="left:1272px;top:558px;width:303px;height:10px;background:#38301e;border-radius:2px"></div>
<div class="r" style="left:1272px;top:570px;width:303px;height:10px;background:#37311e;border-radius:2px"></div>
<div class="r" style="left:1272px;top:582px;width:303px;height:10px;background:#35321e;border-radius:2px"></div>
<div class="r" style="left:1272px;top:594px;width:303px;height:10px;background:#33331f;border-radius:2px"></div>
<div class="r" style="left:1272px;top:606px;width:303px;height:10px;background:#313320;border-radius:2px"></div>
<div class="r" style="left:1272px;top:618px;width:303px;height:10px;background:#2e3321;border-radius:2px"></div>
<div class="r" style="left:1272px;top:630px;width:303px;height:10px;background:#2c3322;border-radius:2px"></div>
<div class="r" style="left:1272px;top:642px;width:303px;height:10px;background:#293223;border-radius:2px"></div>
<div class="r" style="left:1272px;top:654px;width:303px;height:10px;background:linear-gradient(90deg,#53924f,#6cb462 22%,#78c46c 40%,#6db563 58%,#77c26b 76%,#58984f);border-radius:2px"></div>
<div class="r" style="left:1272px;top:666px;width:303px;height:10px;background:linear-gradient(90deg,#53924f,#6cb462 22%,#78c46c 40%,#6db563 58%,#77c26b 76%,#58984f);border-radius:2px"></div>
<div class="t" style="left:1398.44px;top:679.96px;font-size:14.7px;color:#ccccdc;letter-spacing:-0.099px;-webkit-text-stroke:0.15px #ccccdc;">worker1</div>
<div class="t" style="left:1695.43px;top:458.38px;font-size:26.25px;color:#7ccb6f;letter-spacing:-1.069px;-webkit-text-stroke:0.1px #7ccb6f;">10.9</div>
<div class="t" style="left:1745.00px;top:464.01px;font-size:19.95px;color:#7ccb6f;-webkit-text-stroke:0.1px #7ccb6f;transform:scaleX(0.86);transform-origin:0 0">%</div>
<div class="r" style="left:1577px;top:485px;width:304px;height:193px;background:#08090b"></div>
<div class="r" style="left:1577px;top:486px;width:304px;height:10px;background:#3a1f22;border-radius:2px"></div>
<div class="r" style="left:1577px;top:498px;width:304px;height:10px;background:#3a2321;border-radius:2px"></div>
<div class="r" style="left:1577px;top:510px;width:304px;height:10px;background:#3a2620;border-radius:2px"></div>
<div class="r" style="left:1577px;top:522px;width:304px;height:10px;background:#3a291f;border-radius:2px"></div>
<div class="r" style="left:1577px;top:534px;width:304px;height:10px;background:#392b1f;border-radius:2px"></div>
<div class="r" style="left:1577px;top:546px;width:304px;height:10px;background:#392e1e;border-radius:2px"></div>
<div class="r" style="left:1577px;top:558px;width:304px;height:10px;background:#38301e;border-radius:2px"></div>
<div class="r" style="left:1577px;top:570px;width:304px;height:10px;background:#37311e;border-radius:2px"></div>
<div class="r" style="left:1577px;top:582px;width:304px;height:10px;background:#35321e;border-radius:2px"></div>
<div class="r" style="left:1577px;top:594px;width:304px;height:10px;background:#33331f;border-radius:2px"></div>
<div class="r" style="left:1577px;top:606px;width:304px;height:10px;background:#313320;border-radius:2px"></div>
<div class="r" style="left:1577px;top:618px;width:304px;height:10px;background:#2e3321;border-radius:2px"></div>
<div class="r" style="left:1577px;top:630px;width:304px;height:10px;background:#2c3322;border-radius:2px"></div>
<div class="r" style="left:1577px;top:642px;width:304px;height:10px;background:#293223;border-radius:2px"></div>
<div class="r" style="left:1577px;top:654px;width:304px;height:10px;background:linear-gradient(90deg,#53924f,#6cb462 22%,#78c46c 40%,#6db563 58%,#77c26b 76%,#58984f);border-radius:2px"></div>
<div class="r" style="left:1577px;top:666px;width:304px;height:10px;background:linear-gradient(90deg,#53924f,#6cb462 22%,#78c46c 40%,#6db563 58%,#77c26b 76%,#58984f);border-radius:2px"></div>
<div class="t" style="left:1702.94px;top:679.96px;font-size:14.7px;color:#ccccdc;letter-spacing:0.234px;-webkit-text-stroke:0.15px #ccccdc;">worker2</div>
<div class="t" style="left:965.19px;top:724.66px;font-size:14.7px;color:#ccccdc;letter-spacing:0.362px;-webkit-text-stroke:0.2px #ccccdc;">Disk Usage par VM</div>
<div class="t" style="left:1083.59px;top:762.38px;font-size:26.25px;color:#7ccb6f;letter-spacing:-0.309px;-webkit-text-stroke:0.1px #7ccb6f;">7.46</div>
<div class="t" style="left:1135.50px;top:768.01px;font-size:19.95px;color:#7ccb6f;-webkit-text-stroke:0.1px #7ccb6f;transform:scaleX(0.86);transform-origin:0 0">%</div>
<div class="r" style="left:966px;top:789px;width:304px;height:193px;background:#08090b"></div>
<div class="r" style="left:966px;top:790px;width:304px;height:10px;background:#3a1f22;border-radius:2px"></div>
<div class="r" style="left:966px;top:802px;width:304px;height:10px;background:#3a2321;border-radius:2px"></div>
<div class="r" style="left:966px;top:814px;width:304px;height:10px;background:#3a2620;border-radius:2px"></div>
<div class="r" style="left:966px;top:826px;width:304px;height:10px;background:#3a291f;border-radius:2px"></div>
<div class="r" style="left:966px;top:838px;width:304px;height:10px;background:#392b1f;border-radius:2px"></div>
<div class="r" style="left:966px;top:850px;width:304px;height:10px;background:#392e1e;border-radius:2px"></div>
<div class="r" style="left:966px;top:862px;width:304px;height:10px;background:#38301e;border-radius:2px"></div>
<div class="r" style="left:966px;top:874px;width:304px;height:10px;background:#37311e;border-radius:2px"></div>
<div class="r" style="left:966px;top:886px;width:304px;height:10px;background:#35321e;border-radius:2px"></div>
<div class="r" style="left:966px;top:898px;width:304px;height:10px;background:#33331f;border-radius:2px"></div>
<div class="r" style="left:966px;top:910px;width:304px;height:10px;background:#313320;border-radius:2px"></div>
<div class="r" style="left:966px;top:922px;width:304px;height:10px;background:#2e3321;border-radius:2px"></div>
<div class="r" style="left:966px;top:934px;width:304px;height:10px;background:#2c3322;border-radius:2px"></div>
<div class="r" style="left:966px;top:946px;width:304px;height:10px;background:#293223;border-radius:2px"></div>
<div class="r" style="left:966px;top:958px;width:304px;height:10px;background:linear-gradient(90deg,#53924f,#6cb462 22%,#78c46c 40%,#6db563 58%,#77c26b 76%,#58984f);border-radius:2px"></div>
<div class="r" style="left:966px;top:970px;width:304px;height:10px;background:linear-gradient(90deg,#53924f,#6cb462 22%,#78c46c 40%,#6db563 58%,#77c26b 76%,#58984f);border-radius:2px"></div>
<div class="t" style="left:1389.81px;top:762.38px;font-size:26.25px;color:#7ccb6f;letter-spacing:-0.572px;-webkit-text-stroke:0.1px #7ccb6f;">4.85</div>
<div class="t" style="left:1441.00px;top:768.01px;font-size:19.95px;color:#7ccb6f;-webkit-text-stroke:0.1px #7ccb6f;transform:scaleX(0.86);transform-origin:0 0">%</div>
<div class="r" style="left:1272px;top:789px;width:303px;height:193px;background:#08090b"></div>
<div class="r" style="left:1272px;top:790px;width:303px;height:10px;background:#3a1f22;border-radius:2px"></div>
<div class="r" style="left:1272px;top:802px;width:303px;height:10px;background:#3a2321;border-radius:2px"></div>
<div class="r" style="left:1272px;top:814px;width:303px;height:10px;background:#3a2620;border-radius:2px"></div>
<div class="r" style="left:1272px;top:826px;width:303px;height:10px;background:#3a291f;border-radius:2px"></div>
<div class="r" style="left:1272px;top:838px;width:303px;height:10px;background:#392b1f;border-radius:2px"></div>
<div class="r" style="left:1272px;top:850px;width:303px;height:10px;background:#392e1e;border-radius:2px"></div>
<div class="r" style="left:1272px;top:862px;width:303px;height:10px;background:#38301e;border-radius:2px"></div>
<div class="r" style="left:1272px;top:874px;width:303px;height:10px;background:#37311e;border-radius:2px"></div>
<div class="r" style="left:1272px;top:886px;width:303px;height:10px;background:#35321e;border-radius:2px"></div>
<div class="r" style="left:1272px;top:898px;width:303px;height:10px;background:#33331f;border-radius:2px"></div>
<div class="r" style="left:1272px;top:910px;width:303px;height:10px;background:#313320;border-radius:2px"></div>
<div class="r" style="left:1272px;top:922px;width:303px;height:10px;background:#2e3321;border-radius:2px"></div>
<div class="r" style="left:1272px;top:934px;width:303px;height:10px;background:#2c3322;border-radius:2px"></div>
<div class="r" style="left:1272px;top:946px;width:303px;height:10px;background:#293223;border-radius:2px"></div>
<div class="r" style="left:1272px;top:958px;width:303px;height:10px;background:linear-gradient(90deg,#53924f,#6cb462 22%,#78c46c 40%,#6db563 58%,#77c26b 76%,#58984f);border-radius:2px"></div>
<div class="r" style="left:1272px;top:970px;width:303px;height:10px;background:linear-gradient(90deg,#53924f,#6cb462 22%,#78c46c 40%,#6db563 58%,#77c26b 76%,#58984f);border-radius:2px"></div>
<div class="t" style="left:1694.31px;top:762.38px;font-size:26.25px;color:#7ccb6f;letter-spacing:-0.015px;-webkit-text-stroke:0.1px #7ccb6f;">4.84</div>
<div class="t" style="left:1747.50px;top:768.01px;font-size:19.95px;color:#7ccb6f;-webkit-text-stroke:0.1px #7ccb6f;transform:scaleX(0.86);transform-origin:0 0">%</div>
<div class="r" style="left:1577px;top:789px;width:304px;height:193px;background:#08090b"></div>
<div class="r" style="left:1577px;top:790px;width:304px;height:10px;background:#3a1f22;border-radius:2px"></div>
<div class="r" style="left:1577px;top:802px;width:304px;height:10px;background:#3a2321;border-radius:2px"></div>
<div class="r" style="left:1577px;top:814px;width:304px;height:10px;background:#3a2620;border-radius:2px"></div>
<div class="r" style="left:1577px;top:826px;width:304px;height:10px;background:#3a291f;border-radius:2px"></div>
<div class="r" style="left:1577px;top:838px;width:304px;height:10px;background:#392b1f;border-radius:2px"></div>
<div class="r" style="left:1577px;top:850px;width:304px;height:10px;background:#392e1e;border-radius:2px"></div>
<div class="r" style="left:1577px;top:862px;width:304px;height:10px;background:#38301e;border-radius:2px"></div>
<div class="r" style="left:1577px;top:874px;width:304px;height:10px;background:#37311e;border-radius:2px"></div>
<div class="r" style="left:1577px;top:886px;width:304px;height:10px;background:#35321e;border-radius:2px"></div>
<div class="r" style="left:1577px;top:898px;width:304px;height:10px;background:#33331f;border-radius:2px"></div>
<div class="r" style="left:1577px;top:910px;width:304px;height:10px;background:#313320;border-radius:2px"></div>
<div class="r" style="left:1577px;top:922px;width:304px;height:10px;background:#2e3321;border-radius:2px"></div>
<div class="r" style="left:1577px;top:934px;width:304px;height:10px;background:#2c3322;border-radius:2px"></div>
<div class="r" style="left:1577px;top:946px;width:304px;height:10px;background:#293223;border-radius:2px"></div>
<div class="r" style="left:1577px;top:958px;width:304px;height:10px;background:linear-gradient(90deg,#53924f,#6cb462 22%,#78c46c 40%,#6db563 58%,#77c26b 76%,#58984f);border-radius:2px"></div>
<div class="r" style="left:1577px;top:970px;width:304px;height:10px;background:linear-gradient(90deg,#53924f,#6cb462 22%,#78c46c 40%,#6db563 58%,#77c26b 76%,#58984f);border-radius:2px"></div>
<div class="t" style="left:24.19px;top:724.66px;font-size:14.7px;color:#ccccdc;letter-spacing:0.272px;-webkit-text-stroke:0.2px #ccccdc;">Réseau par VM</div>
<svg class="r" style="left:0px;top:0px;" width="1905" height="945" viewBox="0 0 1905 945"><line x1="79" y1="794.5" x2="822" y2="794.5" stroke="rgba(204,204,220,0.10)"/><line x1="79" y1="841.5" x2="822" y2="841.5" stroke="rgba(204,204,220,0.10)"/><line x1="79" y1="888.5" x2="822" y2="888.5" stroke="rgba(204,204,220,0.10)"/><line x1="79" y1="934.5" x2="822" y2="934.5" stroke="rgba(204,204,220,0.10)"/><line x1="177.5" y1="764" x2="177.5" y2="945" stroke="rgba(204,204,220,0.10)"/><line x1="301.5" y1="764" x2="301.5" y2="945" stroke="rgba(204,204,220,0.10)"/><line x1="424.5" y1="764" x2="424.5" y2="945" stroke="rgba(204,204,220,0.10)"/><line x1="548.5" y1="764" x2="548.5" y2="945" stroke="rgba(204,204,220,0.10)"/><line x1="672.5" y1="764" x2="672.5" y2="945" stroke="rgba(204,204,220,0.10)"/><line x1="796.5" y1="764" x2="796.5" y2="945" stroke="rgba(204,204,220,0.10)"/></svg>
<svg class="r" style="left:0px;top:0px;" width="1905" height="945" viewBox="0 0 1905 945"><defs><clipPath id="netclip"><rect x="79" y="764" width="744" height="181"/></clipPath></defs><g clip-path="url(#netclip)"><polygon points="562.0,946.0 567.2,936.0 573.0,936.0 579.3,928.0 585.6,928.0 592.4,919.0 679.0,919.0 684.4,952.0 691.2,952.0 696.7,965.0 709.0,965.0 815.4,965.0 822.0,965.0 822.0,980.0 815.4,980.0 709.0,980.0 696.7,980.0 691.2,980.0 684.4,980.0 679.0,980.0 592.4,980.0 585.6,980.0 579.3,980.0 573.0,980.0 567.2,980.0 562.0,980.0" fill="#2c4a2e"/><polygon points="562.0,946.0 567.2,917.0 573.0,917.0 579.3,901.0 585.6,901.0 592.4,885.0 679.0,885.0 684.4,939.8 691.2,939.8 696.7,960.0 709.0,955.0 815.4,955.0 822.0,960.0 822.0,965.0 815.4,965.0 709.0,965.0 696.7,965.0 691.2,952.0 684.4,952.0 679.0,919.0 592.4,919.0 585.6,928.0 579.3,928.0 573.0,936.0 567.2,936.0 562.0,946.0" fill="#504a1b"/><polygon points="562.0,946.0 567.2,887.4 573.0,887.4 579.3,871.2 585.6,871.2 592.4,852.3 679.0,852.3 684.4,931.5 691.2,931.5 696.7,955.0 709.0,927.8 815.4,927.8 822.0,934.0 822.0,960.0 815.4,955.0 709.0,955.0 696.7,960.0 691.2,939.8 684.4,939.8 679.0,885.0 592.4,885.0 585.6,901.0 579.3,901.0 573.0,917.0 567.2,917.0 562.0,946.0" fill="#3a4863"/><polygon points="562.0,946.0 567.2,845.0 573.0,845.0 579.3,821.0 585.6,821.0 592.4,793.0 679.0,793.0 684.4,911.3 691.2,911.3 696.7,933.0 709.0,905.3 815.4,905.3 822.0,919.0 822.0,934.0 815.4,927.8 709.0,927.8 696.7,955.0 691.2,931.5 684.4,931.5 679.0,852.3 592.4,852.3 585.6,871.2 579.3,871.2 573.0,887.4 567.2,887.4 562.0,946.0" fill="#5a3517"/><polygon points="562.0,946.0 567.2,842.0 573.0,842.0 579.3,818.0 585.6,818.0 592.4,789.5 679.0,789.5 684.4,908.0 691.2,908.0 696.7,931.0 709.0,902.5 815.4,902.5 822.0,914.0 822.0,919.0 815.4,905.3 709.0,905.3 696.7,933.0 691.2,911.3 684.4,911.3 679.0,793.0 592.4,793.0 585.6,821.0 579.3,821.0 573.0,845.0 567.2,845.0 562.0,946.0" fill="#4a2430"/><polygon points="562.0,946.0 567.2,838.8 573.0,838.8 579.3,814.6 585.6,814.6 592.4,786.2 679.0,786.2 684.4,905.0 691.2,905.0 696.7,929.0 709.0,899.8 815.4,899.8 822.0,910.0 822.0,914.0 815.4,902.5 709.0,902.5 696.7,931.0 691.2,908.0 684.4,908.0 679.0,789.5 592.4,789.5 585.6,818.0 579.3,818.0 573.0,842.0 567.2,842.0 562.0,946.0" fill="#2a3d5e"/><polyline points="562.0,946.0 567.2,936.0 573.0,936.0 579.3,928.0 585.6,928.0 592.4,919.0 679.0,919.0 684.4,952.0 691.2,952.0 696.7,965.0 709.0,965.0 815.4,965.0 822.0,965.0" fill="none" stroke="#73bf69" stroke-width="1.1" stroke-linejoin="round"/><polyline points="562.0,946.0 567.2,917.0 573.0,917.0 579.3,901.0 585.6,901.0 592.4,885.0 679.0,885.0 684.4,939.8 691.2,939.8 696.7,960.0 709.0,955.0 815.4,955.0 822.0,960.0" fill="none" stroke="#f2cc0c" stroke-width="1.1" stroke-linejoin="round"/><polyline points="562.0,946.0 567.2,887.4 573.0,887.4 579.3,871.2 585.6,871.2 592.4,852.3 679.0,852.3 684.4,931.5 691.2,931.5 696.7,955.0 709.0,927.8 815.4,927.8 822.0,934.0" fill="none" stroke="#8ab8ff" stroke-width="1.1" stroke-linejoin="round"/><polyline points="562.0,946.0 567.2,845.0 573.0,845.0 579.3,821.0 585.6,821.0 592.4,793.0 679.0,793.0 684.4,911.3 691.2,911.3 696.7,933.0 709.0,905.3 815.4,905.3 822.0,919.0" fill="none" stroke="#ff780a" stroke-width="1.1" stroke-linejoin="round"/><polyline points="562.0,946.0 567.2,842.0 573.0,842.0 579.3,818.0 585.6,818.0 592.4,789.5 679.0,789.5 684.4,908.0 691.2,908.0 696.7,931.0 709.0,902.5 815.4,902.5 822.0,914.0" fill="none" stroke="#f2495c" stroke-width="1.1" stroke-linejoin="round"/><polyline points="562.0,946.0 567.2,838.8 573.0,838.8 579.3,814.6 585.6,814.6 592.4,786.2 679.0,786.2 684.4,905.0 691.2,905.0 696.7,929.0 709.0,899.8 815.4,899.8 822.0,910.0" fill="none" stroke="#5794f2" stroke-width="1.1" stroke-linejoin="round"/><polygon points="177.3,970.0 183.5,970.0 189.3,970.0 202.0,970.0 208.7,970.0 230.5,970.0 294.0,970.0 297.6,970.0 297.6,980.0 294.0,980.0 230.5,980.0 208.7,980.0 202.0,980.0 189.3,980.0 183.5,980.0 177.3,980.0" fill="#2c4a2e"/><polygon points="177.3,965.0 183.5,965.0 189.3,965.0 202.0,965.0 208.7,965.0 230.5,965.0 294.0,965.0 297.6,965.0 297.6,970.0 294.0,970.0 230.5,970.0 208.7,970.0 202.0,970.0 189.3,970.0 183.5,970.0 177.3,970.0" fill="#504a1b"/><polygon points="177.3,960.0 183.5,960.0 189.3,960.0 202.0,960.0 208.7,960.0 230.5,960.0 294.0,960.0 297.6,960.0 297.6,965.0 294.0,965.0 230.5,965.0 208.7,965.0 202.0,965.0 189.3,965.0 183.5,965.0 177.3,965.0" fill="#3a4863"/><polygon points="177.3,946.0 183.5,940.6 189.3,939.5 202.0,944.5 208.7,944.8 230.5,944.5 294.0,944.5 297.6,955.0 297.6,960.0 294.0,960.0 230.5,960.0 208.7,960.0 202.0,960.0 189.3,960.0 183.5,960.0 177.3,960.0" fill="#5a3517"/><polygon points="177.3,946.0 183.5,933.3 189.3,931.9 202.0,941.0 208.7,941.8 230.5,941.5 294.0,941.5 297.6,950.0 297.6,955.0 294.0,944.5 230.5,944.5 208.7,944.8 202.0,944.5 189.3,939.5 183.5,940.6 177.3,946.0" fill="#4a2430"/><polygon points="177.3,946.0 183.5,925.3 189.3,923.5 202.0,937.0 208.7,939.0 230.5,937.6 294.0,937.6 297.6,946.0 297.6,950.0 294.0,941.5 230.5,941.5 208.7,941.8 202.0,941.0 189.3,931.9 183.5,933.3 177.3,946.0" fill="#2a3d5e"/><polyline points="177.3,970.0 183.5,970.0 189.3,970.0 202.0,970.0 208.7,970.0 230.5,970.0 294.0,970.0 297.6,970.0" fill="none" stroke="#73bf69" stroke-width="1.1" stroke-linejoin="round"/><polyline points="177.3,965.0 183.5,965.0 189.3,965.0 202.0,965.0 208.7,965.0 230.5,965.0 294.0,965.0 297.6,965.0" fill="none" stroke="#f2cc0c" stroke-width="1.1" stroke-linejoin="round"/><polyline points="177.3,960.0 183.5,960.0 189.3,960.0 202.0,960.0 208.7,960.0 230.5,960.0 294.0,960.0 297.6,960.0" fill="none" stroke="#8ab8ff" stroke-width="1.1" stroke-linejoin="round"/><polyline points="177.3,946.0 183.5,940.6 189.3,939.5 202.0,944.5 208.7,944.8 230.5,944.5 294.0,944.5 297.6,955.0" fill="none" stroke="#ff780a" stroke-width="1.1" stroke-linejoin="round"/><polyline points="177.3,946.0 183.5,933.3 189.3,931.9 202.0,941.0 208.7,941.8 230.5,941.5 294.0,941.5 297.6,950.0" fill="none" stroke="#f2495c" stroke-width="1.1" stroke-linejoin="round"/><polyline points="177.3,946.0 183.5,925.3 189.3,923.5 202.0,937.0 208.7,939.0 230.5,937.6 294.0,937.6 297.6,946.0" fill="none" stroke="#5794f2" stroke-width="1.1" stroke-linejoin="round"/></g><line x1="79" y1="794.5" x2="822" y2="794.5" stroke="rgba(204,204,220,0.07)"/><line x1="79" y1="841.5" x2="822" y2="841.5" stroke="rgba(204,204,220,0.07)"/><line x1="79" y1="888.5" x2="822" y2="888.5" stroke="rgba(204,204,220,0.07)"/><line x1="79" y1="934.5" x2="822" y2="934.5" stroke="rgba(204,204,220,0.07)"/><line x1="177.5" y1="764" x2="177.5" y2="945" stroke="rgba(204,204,220,0.07)"/><line x1="301.5" y1="764" x2="301.5" y2="945" stroke="rgba(204,204,220,0.07)"/><line x1="424.5" y1="764" x2="424.5" y2="945" stroke="rgba(204,204,220,0.07)"/><line x1="548.5" y1="764" x2="548.5" y2="945" stroke="rgba(204,204,220,0.07)"/><line x1="672.5" y1="764" x2="672.5" y2="945" stroke="rgba(204,204,220,0.07)"/><line x1="796.5" y1="764" x2="796.5" y2="945" stroke="rgba(204,204,220,0.07)"/></svg>
<div class="t" style="left:28.96px;top:787.93px;font-size:12.6px;color:#ccccdc;letter-spacing:0.657px;-webkit-text-stroke:0.15px #ccccdc;">80 kb/s</div>
<div class="t" style="left:28.87px;top:834.93px;font-size:12.6px;color:#ccccdc;letter-spacing:0.673px;-webkit-text-stroke:0.15px #ccccdc;">60 kb/s</div>
<div class="t" style="left:29.22px;top:881.93px;font-size:12.6px;color:#ccccdc;letter-spacing:0.615px;-webkit-text-stroke:0.15px #ccccdc;">40 kb/s</div>
<div class="t" style="left:28.87px;top:927.93px;font-size:12.6px;color:#ccccdc;letter-spacing:0.673px;-webkit-text-stroke:0.15px #ccccdc;">20 kb/s</div>
<div class="r" style="left:833px;top:767.0px;width:14px;height:4px;background:#73bf69;border-radius:2px"></div>
<div class="t" style="left:855.58px;top:762.73px;font-size:12.6px;color:#ccccdc;letter-spacing:0.221px;-webkit-text-stroke:0.15px #ccccdc;">manager TX</div>
<div class="r" style="left:833px;top:789.98px;width:14px;height:4px;background:#f2cc0c;border-radius:2px"></div>
<div class="t" style="left:856.43px;top:785.71px;font-size:12.6px;color:#ccccdc;letter-spacing:0.006px;-webkit-text-stroke:0.15px #ccccdc;">worker1 TX</div>
<div class="r" style="left:833px;top:812.96px;width:14px;height:4px;background:#8ab8ff;border-radius:2px"></div>
<div class="t" style="left:856.43px;top:808.69px;font-size:12.6px;color:#ccccdc;letter-spacing:0.262px;-webkit-text-stroke:0.15px #ccccdc;">worker2 TX</div>
<div class="r" style="left:833px;top:835.94px;width:14px;height:4px;background:#ff780a;border-radius:2px"></div>
<div class="t" style="left:855.58px;top:831.67px;font-size:12.6px;color:#ccccdc;letter-spacing:0.039px;-webkit-text-stroke:0.15px #ccccdc;">manager RX</div>
<div class="r" style="left:833px;top:858.92px;width:14px;height:4px;background:#f2495c;border-radius:2px"></div>
<div class="t" style="left:856.43px;top:854.65px;font-size:12.6px;color:#ccccdc;letter-spacing:-0.176px;-webkit-text-stroke:0.15px #ccccdc;">worker1 RX</div>
<div class="r" style="left:833px;top:881.9px;width:14px;height:4px;background:#5794f2;border-radius:2px"></div>
<div class="t" style="left:856.43px;top:877.63px;font-size:12.6px;color:#ccccdc;letter-spacing:0.046px;-webkit-text-stroke:0.15px #ccccdc;">worker2 RX</div>
<div class="r" style="left:1905px;top:0px;width:15px;height:945px;background:#2b2b2b;border-left:1px solid #1a1a1a"></div>
<svg class="r" style="left:1905px;top:0px;" width="15" height="945" viewBox="0 0 15 945"><polygon points="3.5,11 7.5,5 11.5,11" fill="#a3a3a3"/><polygon points="3.5,936 7.5,942 11.5,936" fill="#a3a3a3"/></svg>
<div class="r" style="left:1908px;top:17px;width:9px;height:539px;background:#a5a5a5;border-radius:5px"></div>
</body></html>
